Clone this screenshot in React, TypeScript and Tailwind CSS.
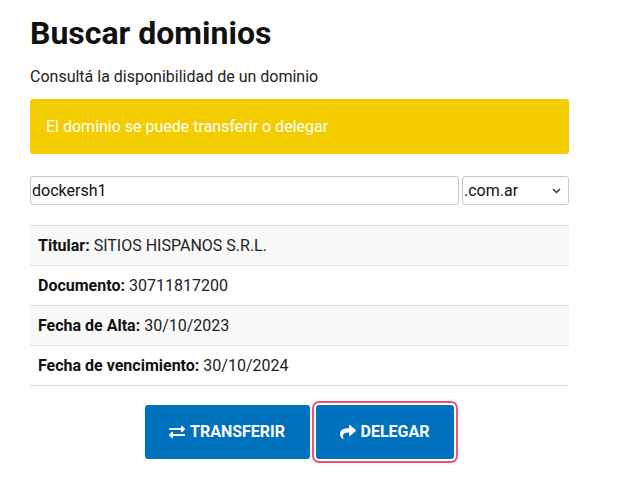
import React from "react";
import { FaExchangeAlt, FaShare } from "react-icons/fa";

export default function App() {
  const rows = [
    { label: "Titular:", value: "SITIOS HISPANOS S.R.L.", bg: "bg-[#f9f9f9]" },
    { label: "Documento:", value: "30711817200", bg: "bg-white" },
    { label: "Fecha de Alta:", value: "30/10/2023", bg: "bg-[#f9f9f9]" },
    { label: "Fecha de vencimiento:", value: "30/10/2024", bg: "bg-white" },
  ];
  return (
    <div className="min-h-[482px] bg-white pl-[30px] pt-[14px] text-[#111]" style={{ fontFamily: "Roboto, 'Liberation Sans', sans-serif" }}>
      <div className="w-[539px]">
        <h1 className="text-[32px] font-bold leading-[38px] text-[#111]">Buscar dominios</h1>
        <p className="mt-[15px] text-[16px] leading-[19px] text-[#222]">Consultá la disponibilidad de un dominio</p>
        <div className="mt-[13px] flex h-[55px] items-center rounded-[3px] bg-[#f4cd00] px-[16px] text-[16px] text-white">
          El dominio se puede transferir o delegar
        </div>
        <div className="mt-[22px] flex gap-[3px]">
          <input
            className="h-[29px] w-[429px] rounded-[3px] border border-[#c8c8c8] px-[1px] text-[16px] text-[#111] outline-none"
            defaultValue="dockersh1"
          />
          <div className="relative flex h-[29px] flex-1 items-center rounded-[3px] border border-[#c8c8c8] pl-[1px] text-[16px] text-[#111]">
            <span>.com.ar</span>
            <svg className="absolute right-[7px] top-[11px]" width="9" height="6" viewBox="0 0 9 6">
              <path d="M1 1 L4.5 4.5 L8 1" fill="none" stroke="#333" strokeWidth="1.4" />
            </svg>
          </div>
        </div>
        <div className="mt-[20px] border-b border-[#ddd]">
          {rows.map((r) => (
            <div key={r.label} className={`flex h-[40px] items-center border-t border-[#ddd] px-[8px] text-[16px] ${r.bg}`}>
              <span className="font-bold text-[#111]">{r.label}</span>
              <span className="ml-[4px] text-[#222]">{r.value}</span>
            </div>
          ))}
        </div>
        <div className="mt-[19px] flex justify-center gap-[6px] pr-[1px]">
          <button className="flex h-[54px] w-[165px] items-center justify-center gap-[5px] rounded-[3px] bg-[#0071bc] text-[16px] font-bold text-white">
            <FaExchangeAlt className="h-[16px] w-[16px]" />
            TRANSFERIR
          </button>
          <button className="flex h-[54px] w-[138px] items-center justify-center gap-[5px] rounded-[3px] bg-[#0071bc] text-[16px] font-bold text-white ring-2 ring-[#f0507c] ring-offset-2 ring-offset-white">
            <FaShare className="h-[16px] w-[16px]" />
            DELEGAR
          </button>
        </div>
      </div>
    </div>
  );
}
